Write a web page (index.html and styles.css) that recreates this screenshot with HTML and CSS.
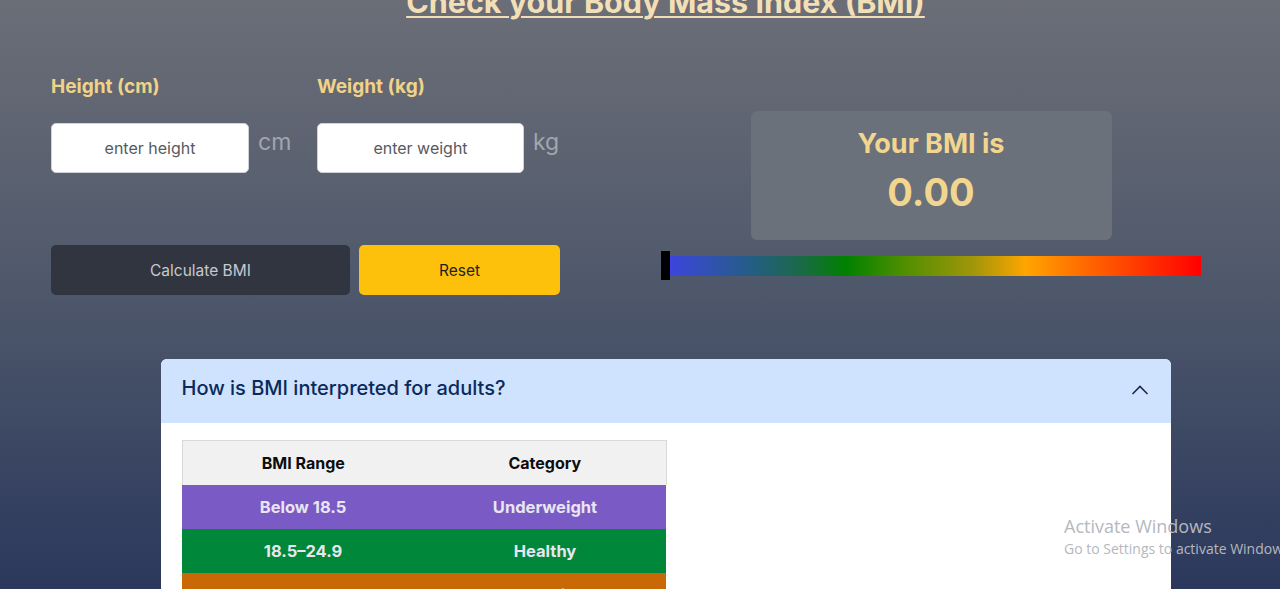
FILE: index.html
```html
<!DOCTYPE html>
<html lang="en">
<head>
<meta charset="utf-8">
<title>BMI Calculator</title>
<link rel="stylesheet" href="styles.css">
</head>
<body>
<main class="page">
  <h1 class="title">Check your Body Mass Index (BMI)</h1>

  <section class="calc">
    <div class="left">
      <div class="fields">
        <div class="field field-h">
          <label class="label">Height (cm)</label>
          <div class="input-row">
            <input class="input input-h" type="text" placeholder="enter height">
            <span class="unit">cm</span>
          </div>
        </div>
        <div class="field">
          <label class="label">Weight (kg)</label>
          <div class="input-row">
            <input class="input input-w" type="text" placeholder="enter weight">
            <span class="unit">kg</span>
          </div>
        </div>
      </div>
      <div class="buttons">
        <button class="btn btn-calc">Calculate BMI</button>
        <button class="btn btn-reset">Reset</button>
      </div>
    </div>

    <div class="right">
      <div class="result">
        <div class="result-label">Your BMI is</div>
        <div class="result-value">0.00</div>
      </div>
      <div class="scale">
        <div class="marker"></div>
        <div class="bar"></div>
      </div>
    </div>
  </section>

  <section class="accordion">
    <div class="acc-head">
      <span class="acc-title">How is BMI interpreted for adults?</span>
      <svg class="chevron" width="18" height="10" viewBox="0 0 18 10" aria-hidden="true">
        <path d="M1.5 9 L9 1.5 L16.5 9" fill="none" stroke="#1b2a48" stroke-width="1.6"/>
      </svg>
    </div>
    <div class="acc-body">
      <table class="bmi-table">
        <thead>
          <tr><th>BMI Range</th><th>Category</th></tr>
        </thead>
        <tbody>
          <tr class="row-under"><td>Below 18.5</td><td>Underweight</td></tr>
          <tr class="row-healthy"><td>18.5–24.9</td><td>Healthy</td></tr>
          <tr class="row-over"><td>25.0–29.9</td><td>Overweight</td></tr>
        </tbody>
      </table>
    </div>
  </section>
</main>

<div class="activate">
  <div class="act-1">Activate Windows</div>
  <div class="act-2">Go to Settings to activate Windows.</div>
</div>
</body>
</html>
```

FILE: styles.css
```css
html, body {
  margin: 0;
  padding: 0;
}

body {
  width: 1280px;
  height: 589px;
  overflow: hidden;
  background: linear-gradient(180deg, #6b6e77 0%, #515a6c 45%, #2b385c 100%);
  font-family: "Inter", "Roboto", "Liberation Sans", sans-serif;
  position: relative;
}

.page {
  padding-left: 51px;
}

.title {
  margin: -16px 0 0 0;
  text-align: center;
  font-size: 30.5px;
  line-height: 36px;
  font-weight: 700;
  color: #f3dfb6;
  text-decoration: underline;
  text-decoration-thickness: 2px;
  text-underline-offset: 3px;
}

.calc {
  display: flex;
  margin-top: 50px;
}

.left {
  width: 610px;
  flex: none;
}

.fields {
  display: flex;
}

.field-h {
  width: 266px;
}

.label {
  display: block;
  height: 34px;
  font-size: 19px;
  line-height: 34px;
  font-weight: 700;
  color: #f1d388;
}

.input-row {
  display: flex;
  align-items: flex-start;
  margin-top: 19px;
}

.input {
  box-sizing: border-box;
  height: 50px;
  border: 1px solid #cfd2d8;
  border-radius: 5px;
  background: #fff;
  font-family: inherit;
  font-size: 16px;
  text-align: center;
  padding: 0;
  color: #333;
}

.input::placeholder {
  color: #575a60;
}

.input-h {
  width: 198px;
}

.input-w {
  width: 207px;
}

.unit {
  margin-left: 9px;
  margin-top: 4px;
  font-size: 23px;
  line-height: 30px;
  color: #a2a6ad;
}

.buttons {
  display: flex;
  gap: 9px;
  margin-top: 72px;
}

.btn {
  height: 50px;
  border: none;
  border-radius: 5px;
  font-family: inherit;
  font-size: 15.5px;
  cursor: pointer;
}

.btn-calc {
  width: 299px;
  background: #31353f;
  color: #c6c9cf;
}

.btn-reset {
  width: 201px;
  background: #fec10b;
  color: #1f1f1f;
}

.right {
  width: 540px;
  flex: none;
  display: flex;
  flex-direction: column;
  align-items: center;
  padding-top: 41px;
}

.result {
  width: 361px;
  height: 129px;
  box-sizing: border-box;
  background: #6b717b;
  border-radius: 6px;
  text-align: center;
  padding-top: 16px;
}

.result-label {
  font-size: 27px;
  line-height: 34px;
  font-weight: 700;
  color: #f2d68f;
}

.result-value {
  font-size: 38px;
  line-height: 52px;
  font-weight: 700;
  color: #f2d68f;
  margin-top: 5px;
}

.scale {
  display: flex;
  align-items: center;
  width: 540px;
  margin-top: 11px;
}

.marker {
  width: 9px;
  height: 29px;
  background: #000;
  flex: none;
}

.bar {
  flex: 1;
  height: 20px;
  background: linear-gradient(90deg,
    #3d45dd 0%,
    #245d86 15%,
    #1a6a45 25%,
    #008100 33%,
    #4f8f00 44%,
    #a0960a 57%,
    #ffa500 67%,
    #ff6a00 78%,
    #ff3a00 88%,
    #ff0000 100%);
}

.accordion {
  width: 1010px;
  margin: 64px auto 0;
  border-radius: 6px 6px 0 0;
  overflow: hidden;
  background: #fff;
}

.acc-head {
  height: 64px;
  background: #cfe2fe;
  display: flex;
  align-items: center;
  justify-content: space-between;
  padding: 0 22px 0 21px;
}

.acc-title {
  font-size: 20px;
  font-weight: 500;
  color: #0a2a5c;
  margin-top: -7px;
}

.chevron {
  margin-top: -2px;
}

.acc-body {
  padding: 17px 21px 20px;
  height: 200px;
}

.bmi-table {
  width: 485px;
  border-collapse: collapse;
  table-layout: fixed;
  font-size: 16.5px;
  font-weight: 700;
  text-align: center;
}

.bmi-table th,
.bmi-table td {
  height: 44px;
  padding: 0;
}

.bmi-table thead tr {
  background: #f1f1f1;
  border: 1px solid #d8d8d8;
  border-bottom: none;
}

.bmi-table th {
  color: #0d0d0d;
  font-weight: 700;
  font-size: 16px;
}

.bmi-table td {
  color: #e8e6ee;
}

.row-under {
  background: #7a5bc6;
}

.row-healthy {
  background: #00873a;
}

.row-over {
  background: #c96905;
}

.activate {
  position: absolute;
  left: 1064px;
  top: 514px;
  white-space: nowrap;
  font-family: "Open Sans", "Liberation Sans", sans-serif;
  color: #b5b8be;
}

.act-1 {
  font-size: 18px;
  line-height: 24px;
}

.act-2 {
  font-size: 14px;
  line-height: 22px;
}
```
